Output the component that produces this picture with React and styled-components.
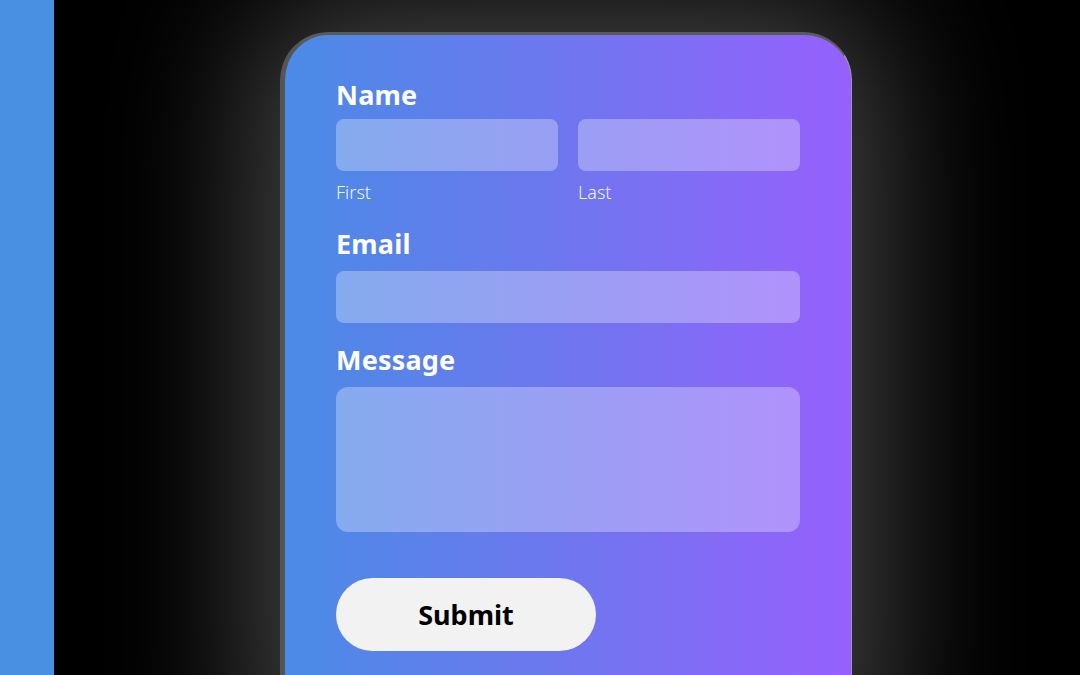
import styled, { createGlobalStyle } from "styled-components"

const GlobalStyle = createGlobalStyle`
  html, body {
    margin: 0;
    padding: 0;
    background: #000;
  }
  * {
    box-sizing: border-box;
  }
`

const Page = styled.div`
  display: flex;
  width: 1080px;
  height: 675px;
  overflow: hidden;
  background: #000;
  font-family: "Noto Sans", "DejaVu Sans", sans-serif;
`

const Strip = styled.div`
  width: 54px;
  flex-shrink: 0;
  background: #4a90e2;
`

const Stage = styled.div`
  flex: 1;
  display: flex;
  padding: 32px 0 0 226px;
`

const Card = styled.form`
  width: 572px;
  height: 720px;
  flex-shrink: 0;
  border-style: solid;
  border-color: #5a5a5a #9c97aa #5a5a5a #555;
  border-width: 3px 1px 0 5px;
  border-radius: 48px 48px 0 0;
  background: linear-gradient(90deg, #4a8be6 0%, #6f76ef 50%, #9660fd 100%);
  box-shadow: 0 0 140px 30px rgba(255, 255, 255, 0.27);
  padding: 43px 51px 0 51px;
  display: flex;
  flex-direction: column;
`

const Label = styled.div`
  color: #fff;
  font-size: 27px;
  font-weight: 700;
  line-height: 34px;
  margin-top: ${(p) => p.$top || 0}px;
  margin-bottom: ${(p) => p.$bottom || 9}px;
  letter-spacing: 0.2px;
`

const Row = styled.div`
  display: grid;
  grid-template-columns: 1fr 1fr;
  column-gap: 20px;
`

const Col = styled.div`
  display: flex;
  flex-direction: column;
`

const Input = styled.div`
  height: 52px;
  border-radius: 8px;
  background: rgba(255, 255, 255, 0.3);
`

const Area = styled(Input)`
  height: 145px;
  border-radius: 12px;
`

const SubLabel = styled.div`
  margin-top: 11px;
  color: rgba(255, 255, 255, 0.95);
  font-size: 18px;
  font-weight: 300;
  line-height: 20px;
`

const Submit = styled.button`
  margin-top: 46px;
  width: 260px;
  height: 73px;
  border: none;
  border-radius: 37px;
  background: #f2f2f2;
  color: #000;
  font-family: inherit;
  font-size: 27px;
  font-weight: 700;
  cursor: pointer;
`

export default function App() {
  return (
    <Page>
      <GlobalStyle />
      <Strip />
      <Stage>
        <Card onSubmit={(e) => e.preventDefault()}>
          <Label $bottom={7}>Name</Label>
          <Row>
            <Col>
              <Input />
              <SubLabel>First</SubLabel>
            </Col>
            <Col>
              <Input />
              <SubLabel>Last</SubLabel>
            </Col>
          </Row>
          <Label $top={25} $bottom={10}>Email</Label>
          <Input />
          <Label $top={20} $bottom={10}>Message</Label>
          <Area />
          <Submit type="submit">Submit</Submit>
        </Card>
      </Stage>
    </Page>
  )
}
